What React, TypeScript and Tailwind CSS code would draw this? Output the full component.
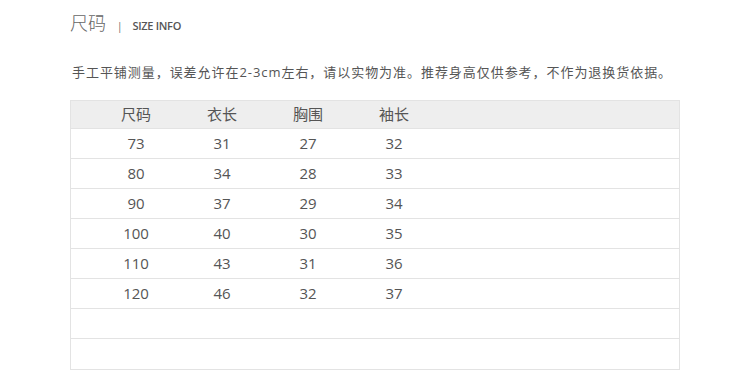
const rows = [
  ["73", "31", "27", "32"],
  ["80", "34", "28", "33"],
  ["90", "37", "29", "34"],
  ["100", "40", "30", "35"],
  ["110", "43", "31", "36"],
  ["120", "46", "32", "37"],
  ["", "", "", ""],
  ["", "", "", ""],
];

const heads = ["尺码", "衣长", "胸围", "袖长"];

export default function App() {
  return (
    <div className="w-[750px] h-[382px] bg-white text-[#555] font-['Open_Sans','Noto_Sans_CJK_SC',sans-serif]">
      <div className="flex items-end pl-[70px] pt-[11px] h-[34px]">
        <span className="text-[18px] leading-[22px] font-light text-[#666]">尺码</span>
        <span className="ml-[11px] mb-[2px] text-[10px] leading-[12px] text-[#666]">|</span>
        <span className="ml-[10px] mb-[2px] text-[11px] leading-[12px] font-semibold tracking-[-0.3px] text-[#555]">SIZE INFO</span>
      </div>

      <p className="mt-[29px] pl-[72px] text-[13px] leading-[18px] tracking-[0.95px] text-[#555]">
        手工平铺测量，误差允许在2-3cm左右，请以实物为准。推荐身高仅供参考，不作为退换货依据。
      </p>

      <div className="mt-[19px] ml-[70px] w-[610px] border border-[#e3e3e3]">
        <div className="flex h-[28px] items-center bg-[#eeeeee] pl-[22px] border-b border-[#e3e3e3]">
          {heads.map((h) => (
            <div key={h} className="w-[86px] text-center text-[15px] text-[#555]">{h}</div>
          ))}
        </div>
        {rows.map((r, i) => (
          <div key={i} className={"flex h-[30px] items-center pl-[22px] " + (i < rows.length - 1 ? "border-b border-[#e3e3e3]" : "")}>
            {r.map((c, j) => (
              <div key={j} className="w-[86px] text-center text-[15px] text-[#555]">{c}</div>
            ))}
          </div>
        ))}
      </div>
    </div>
  );
}
